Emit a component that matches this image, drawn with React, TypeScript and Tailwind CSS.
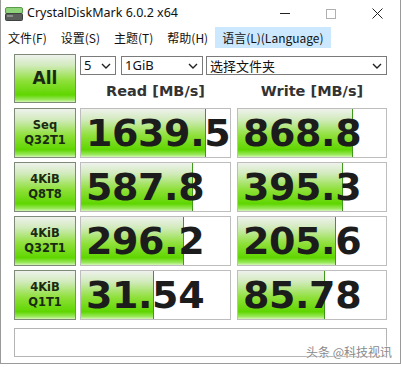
import { CSSProperties } from 'react';

const ui = { fontFamily: '"Noto Sans", "Noto Sans CJK SC", sans-serif' };
const mono = { fontFamily: '"DejaVu Sans", "Noto Sans CJK SC", sans-serif' };

const greenFill =
  'bg-[linear-gradient(to_bottom,#eef1ec_0%,#d2ebbd_22%,#8fe03a_55%,#5fd600_85%,#9be85c_95%,#d4f5b8_100%)]';

interface Row {
  label: [string, string];
  read: string;
  readPct: number;
  write: string;
  writePct: number;
}

const rows: Row[] = [
  { label: ['Seq', 'Q32T1'], read: '1639.5', readPct: 84, write: '868.8', writePct: 78 },
  { label: ['4KiB', 'Q8T8'], read: '587.8', readPct: 75, write: '395.3', writePct: 71 },
  { label: ['4KiB', 'Q32T1'], read: '296.2', readPct: 69, write: '205.6', writePct: 66 },
  { label: ['4KiB', 'Q1T1'], read: '31.54', readPct: 49, write: '85.78', writePct: 59 },
];

function Chevron() {
  return (
    <svg width="10" height="6" viewBox="0 0 10 6" className="shrink-0">
      <path d="M1 1l4 4 4-4" fill="none" stroke="#222" strokeWidth="1.4" />
    </svg>
  );
}

function Select({ value, className, cjk }: { value: string; className: string; cjk?: boolean }) {
  return (
    <div
      className={`h-[19px] border border-[#7a7a7a] bg-white flex items-center justify-between pl-[3px] pr-[4px] text-[13px] text-[#111] ${className}`}
      style={cjk ? { fontFamily: '"Noto Sans CJK SC", sans-serif' } : ui}
    >
      <span className="leading-none">{value}</span>
      <Chevron />
    </div>
  );
}

function Result({ value, pct, width }: { value: string; pct: number; width: string }) {
  const fill: CSSProperties = { width: `${pct}%` };
  return (
    <div className={`relative h-[50px] border border-[#bdbdbd] bg-white overflow-hidden ${width}`}>
      <div className={`absolute left-0 top-0 bottom-0 border-r border-[#3f9a1c] ${greenFill}`} style={fill} />
      <div
        className="relative h-full flex items-center pl-[5px] text-[38px] font-bold leading-none text-[#1c1c1c] tracking-[-0.4px] whitespace-nowrap"
        style={mono}
      >
        {value}
      </div>
    </div>
  );
}

export default function App() {
  return (
    <div className="w-[402px] h-[367px] bg-white relative overflow-hidden">
      <div className="w-[401px] h-[364px] border-l border-r border-b border-[#9a9a9a] flex flex-col">
        {/* title bar */}
        <div className="h-[27px] flex items-center">
          <svg width="18" height="14" viewBox="0 0 18 14" className="ml-[4px]">
            <rect x="0.5" y="0.5" width="17" height="6" rx="1.5" fill="#8fd47a" stroke="#5a9a4a" />
            <rect x="0.5" y="6.5" width="17" height="7" rx="1" fill="#5b5f5b" stroke="#3e423e" />
            <rect x="2" y="8" width="6" height="2" fill="#8a8f8a" />
          </svg>
          <span className="ml-[4px] text-[12.5px] text-[#111] leading-none" style={ui}>
            CrystalDiskMark 6.0.2 x64
          </span>
          <div className="ml-auto flex items-center">
            <div className="w-[46px] flex justify-center">
              <div className="w-[10px] h-px bg-[#222]" />
            </div>
            <div className="w-[46px] flex justify-center">
              <div className="w-[10px] h-[10px] border border-[#b0b0b0]" />
            </div>
            <div className="w-[46px] flex justify-center">
              <svg width="11" height="11" viewBox="0 0 11 11">
                <path d="M0.5 0.5l10 10M10.5 0.5l-10 10" stroke="#222" strokeWidth="1" />
              </svg>
            </div>
          </div>
        </div>

        {/* menu bar */}
        <div
          className="h-[21px] flex items-stretch text-[12px] text-[#111]"
          style={{ fontFamily: '"Noto Sans CJK SC", "Noto Sans", sans-serif' }}
        >
          <div className="px-[7px] flex items-center">文件(F)</div>
          <div className="px-[7px] flex items-center">设置(S)</div>
          <div className="px-[7px] flex items-center">主题(T)</div>
          <div className="px-[7px] flex items-center">帮助(H)</div>
          <div className="px-[7px] flex items-center bg-[#cce8ff]">语言(L)(Language)</div>
        </div>

        {/* body */}
        <div className="relative flex-1 pl-[13px] pt-[6px]">
          <div className="flex">
            <div
              className={`w-[62px] h-[49px] border border-[#7d8a78] flex items-center justify-center text-[17px] font-bold text-[#1a2a12] ${greenFill}`}
              style={mono}
            >
              All
            </div>
            <div className="ml-[4px] w-[307px] flex flex-col">
              <div className="flex mt-[2px]">
                <Select value="5" className="w-[36px]" />
                <Select value="1GiB" className="w-[82px] ml-[5px]" />
                <Select value="选择文件夹" className="w-[181px] ml-[3px]" cjk />
              </div>
              <div
                className="flex mt-[9px] text-[14.5px] font-bold leading-none text-[#333]"
                style={mono}
              >
                <div className="w-[151px] text-center">Read [MB/s]</div>
                <div className="w-[150px] ml-[6px] text-center">Write [MB/s]</div>
              </div>
            </div>
          </div>

          <div className="flex flex-col gap-[4px] mt-[5px]">
            {rows.map((r) => (
              <div key={r.label.join() + r.read} className="flex">
                <div
                  className={`w-[62px] h-[50px] border border-[#7d8a78] flex flex-col items-center justify-center text-[11.5px] font-bold leading-[15px] text-[#1a2a12] ${greenFill}`}
                  style={mono}
                >
                  <span>{r.label[0]}</span>
                  <span>{r.label[1]}</span>
                </div>
                <div className="ml-[4px]">
                  <Result value={r.read} pct={r.readPct} width="w-[151px]" />
                </div>
                <div className="ml-[6px]">
                  <Result value={r.write} pct={r.writePct} width="w-[150px]" />
                </div>
              </div>
            ))}
          </div>

          <div className="mt-[8px] w-[373px] h-[29px] border border-[#b4b4b4] bg-white" />

          <div
            className="absolute right-[8px] bottom-[5px] text-[12px] leading-none text-[#8a8a8a] [text-shadow:0_0_2px_#fff,0_0_2px_#fff]"
            style={{ fontFamily: '"Noto Sans CJK SC", sans-serif' }}
          >
            头条 @科技视讯
          </div>
        </div>
      </div>
    </div>
  );
}
